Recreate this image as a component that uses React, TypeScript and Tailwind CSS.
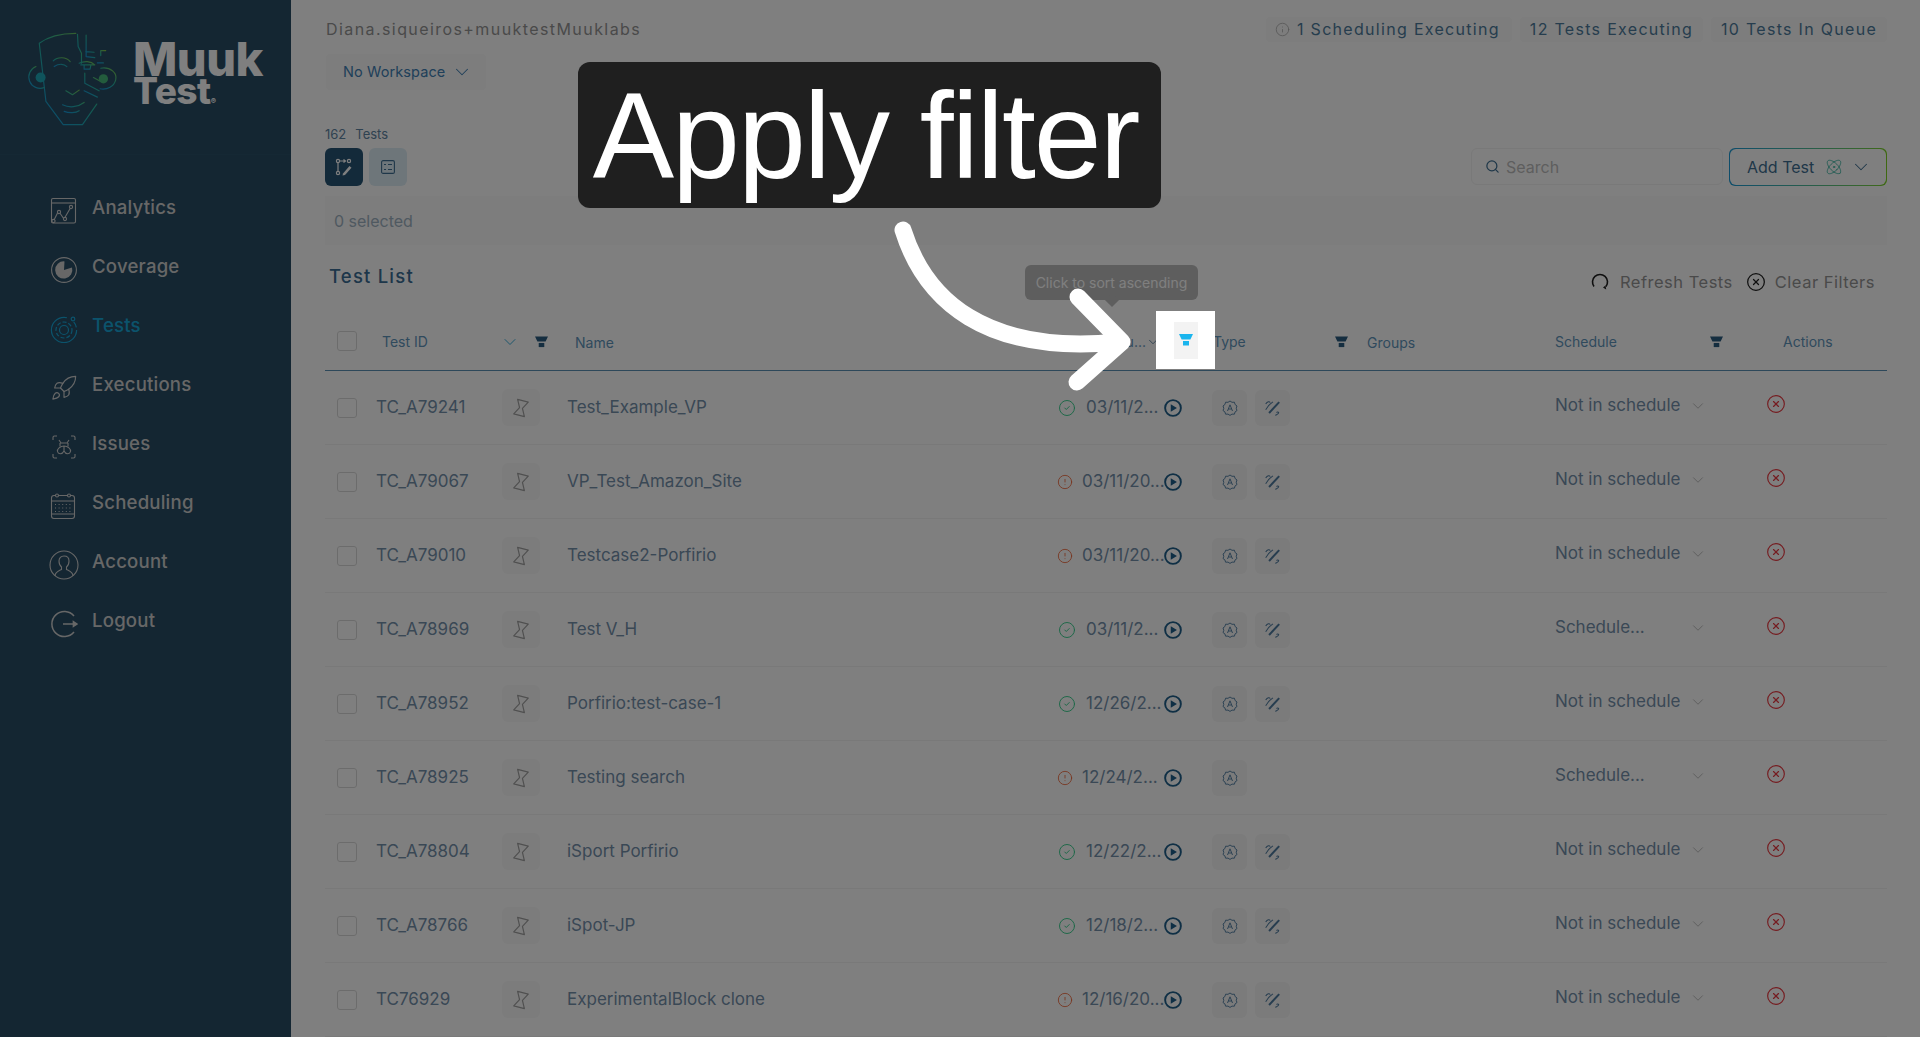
import { Atom, ChevronDown, CircleAlert, CircleCheck, CircleX, Info, Rocket, Search } from "lucide-react"

const FONT = "font-['Inter','Noto_Sans',sans-serif]"

const ROWS = [
  { id: "TC_A79241", name: "Test_Example_VP", ok: true, date: "03/11/2...", sched: "Not in schedule", pen: true },
  { id: "TC_A79067", name: "VP_Test_Amazon_Site", ok: false, date: "03/11/20...", sched: "Not in schedule", pen: true },
  { id: "TC_A79010", name: "Testcase2-Porfirio", ok: false, date: "03/11/20...", sched: "Not in schedule", pen: true },
  { id: "TC_A78969", name: "Test V_H", ok: true, date: "03/11/2...", sched: "Schedule...", pen: true },
  { id: "TC_A78952", name: "Porfirio:test-case-1", ok: true, date: "12/26/2...", sched: "Not in schedule", pen: true },
  { id: "TC_A78925", name: "Testing search", ok: false, date: "12/24/2...", sched: "Schedule...", pen: false },
  { id: "TC_A78804", name: "iSport Porfirio", ok: true, date: "12/22/2...", sched: "Not in schedule", pen: true },
  { id: "TC_A78766", name: "iSpot-JP", ok: true, date: "12/18/2...", sched: "Not in schedule", pen: true },
  { id: "TC76929", name: "ExperimentalBlock clone", ok: false, date: "12/16/20...", sched: "Not in schedule", pen: true },
]

function Funnel({ className }: { className?: string }) {
  return (
    <svg viewBox="0 0 14 12" className={className} fill="currentColor">
      <path d="M0 0h14l-2.6 5.4H2.6z" />
      <path d="M4 7h6v4.5H4z" />
    </svg>
  )
}

function Logo() {
  return (
    <svg viewBox="70 85 290 295" className="w-[97px] h-[98px]" fill="none" strokeWidth="3.5" strokeLinecap="round" strokeLinejoin="round">
      <defs>
        <linearGradient id="face" x1="1" y1="0" x2="0.2" y2="1">
          <stop offset="0" stopColor="#8cc63f" />
          <stop offset="0.5" stopColor="#29b6a0" />
          <stop offset="1" stopColor="#1798d8" />
        </linearGradient>
      </defs>
      <g stroke="url(#face)">
        <path d="M225 95C185 95 145 102 115 125L135 300L187 370H245L288 308" />
        <path d="M230 98L232 135L242 155V185" />
        <path d="M256 100V165L282 168M255 150L280 152" />
        <path d="M300 162V147H315M290 184H308" />
        <path d="M157 178C170 165 195 165 208 180M160 195C175 185 190 187 198 195" />
        <path d="M235 185C250 178 270 178 282 190M240 190H280M250 190V203H268L270 192" />
        <path d="M252 215V245L295 268M250 268L290 287M278 228L300 240" />
        <path d="M195 268L215 280L235 266M185 310C205 320 230 318 250 303M190 330C205 336 225 335 235 328" />
        <path d="M105 195A33 33 0 1 0 130 258" />
        <path d="M300 200C330 195 350 215 345 235C340 255 320 266 298 262" />
        <circle cx="119" cy="228" r="15" fill="#1fa9b8" stroke="none" />
        <circle cx="308" cy="232" r="14" fill="#46b97a" stroke="none" />
      </g>
    </svg>
  )
}

const NAV_ICON = "w-[28px] h-[28px] shrink-0"

function AnalyticsIcon() {
  return (
    <svg viewBox="0 0 28 28" className={NAV_ICON} fill="none" stroke="currentColor" strokeWidth="1.1">
      <rect x="1.5" y="1.5" width="24" height="24.5" rx="1.5" />
      <path d="M1.5 6h24" />
      <path d="M3.5 24L8.5 14L14 22L21 10" />
      <circle cx="3.5" cy="24" r="1.6" fill="#284c64" />
      <circle cx="9" cy="15" r="1.6" fill="#284c64" />
      <circle cx="15" cy="22" r="1.6" fill="#284c64" />
      <circle cx="21" cy="10" r="1.6" fill="#284c64" />
    </svg>
  )
}

function CoverageIcon() {
  return (
    <svg viewBox="0 0 28 28" className={NAV_ICON}>
      <circle cx="14" cy="14" r="12.4" fill="none" stroke="currentColor" strokeWidth="1.1" />
      <path d="M14 14L22 11.5A8.6 8.6 0 1 1 14.5 5.4z" fill="currentColor" />
    </svg>
  )
}

function TestsIcon() {
  return (
    <svg viewBox="0 0 28 28" className={NAV_ICON} fill="none" stroke="currentColor" strokeWidth="1.2">
      <circle cx="14" cy="15" r="12.6" strokeDasharray="62 8 6 4" />
      <circle cx="14" cy="15" r="8" strokeDasharray="4 2" />
      <circle cx="14" cy="15" r="4.5" />
      <circle cx="23" cy="4" r="1.8" />
    </svg>
  )
}

function IssuesIcon() {
  return (
    <svg viewBox="0 0 28 28" className={NAV_ICON} fill="none" stroke="currentColor" strokeWidth="1.1">
      <path d="M3 7V4.500Q3 3 4.500 3H7M21 3h2.500Q25 3 25 4.500V7M25 21v2.500Q25 25 23.500 25H21M7 25H4.500Q3 25 3 23.500V21" />
      <path d="M9 7l2 3h6l2-3M10 10v3.500M18 10v3.500" />
      <path d="M14 13c-4 0-7 3-6.500 5.500S12 22 14 18c2 4 6 3 6.500.5S18 13 14 13zM14 13v5" />
    </svg>
  )
}

function CalendarIcon() {
  return (
    <svg viewBox="0 0 28 28" className={NAV_ICON} fill="none" stroke="currentColor" strokeWidth="1.1">
      <rect x="1.500" y="3.500" width="23" height="23" rx="2.500" />
      <path d="M1.500 9h23M1.500 22h23" />
      <circle cx="7" cy="3.500" r="1.500" fill="#284c64" />
      <circle cx="19" cy="3.500" r="1.500" fill="#284c64" />
      <path d="M5 12.500h17M5 16h17M5 19.500h17" strokeDasharray="1 2.600" />
    </svg>
  )
}

function AccountIcon() {
  return (
    <svg viewBox="0 0 30 30" className="w-[30px] h-[30px] shrink-0" fill="none" stroke="currentColor" strokeWidth="1.1">
      <circle cx="15" cy="15" r="14" />
      <path d="M6 26c0-4 3.500-5 6.500-6.500v-2.500c-2-1.500-2.500-4-2.500-6 0-3 2-5 5-5s5 2 5 5c0 2-.5 4.500-2.500 6v2.500c3 1.500 6.500 2.500 6.500 6.500" />
    </svg>
  )
}

function LogoutIcon() {
  return (
    <svg viewBox="0 0 28 28" className={NAV_ICON} fill="none" stroke="currentColor" strokeWidth="1.500">
      <path d="M24 6A12.500 12.500 0 1 0 24 22" />
      <path d="M13 14h14" />
      <path d="M27 14l-3.600-2.400v4.800z" fill="currentColor" />
    </svg>
  )
}

const NAV = [
  { label: "Analytics", icon: <AnalyticsIcon /> },
  { label: "Coverage", icon: <CoverageIcon /> },
  { label: "Tests", icon: <TestsIcon />, active: true },
  { label: "Executions", icon: <Rocket className={NAV_ICON} strokeWidth={1} /> },
  { label: "Issues", icon: <IssuesIcon /> },
  { label: "Scheduling", icon: <CalendarIcon /> },
  { label: "Account", icon: <AccountIcon /> },
  { label: "Logout", icon: <LogoutIcon /> },
]

function Sidebar() {
  return (
    <aside className="w-[291px] shrink-0 bg-[#284c64] flex flex-col">
      <div className="h-[155px] flex items-start gap-[12px] pl-[24px] pt-[30px] border-b border-[#2b5068]">
        <Logo />
        <div className="font-['Inter',sans-serif] font-extrabold text-white pt-[10px]">
          <div className="text-[47px] leading-[38px] tracking-[-0.5px]">Muuk</div>
          <div className="text-[37px] leading-[26px] tracking-[-0.5px]">
            Test<span className="text-[8px]">®</span>
          </div>
        </div>
      </div>
      <nav className="flex flex-col pt-[24px] gap-[1px]">
        {NAV.map((n) => (
          <a
            key={n.label}
            className={
              n.active
                ? "h-[58px] flex items-center gap-[14px] pl-[50px] text-[#17a7d9]"
                : "h-[58px] flex items-center gap-[14px] pl-[50px] text-[#cfcfcf]"
            }
          >
            <span className="w-[28px] h-[30px] flex items-center justify-center translate-y-[3px]">{n.icon}</span>
            <span className="text-[18.6px] font-medium tracking-[0.2px]">{n.label}</span>
          </a>
        ))}
      </nav>
    </aside>
  )
}

function TopBar() {
  return (
    <div className="flex items-center justify-between h-[24px] mt-[17px]">
      <span className="text-[16px] tracking-[1.42px] text-[#949494] pl-[1px]">Diana.siqueiros+muuktestMuuklabs</span>
      <div className="flex gap-[8px] text-[16px] tracking-[1.3px] text-[#4d7a9c]">
        <span className="h-[25px] w-[246px] flex items-center bg-[#fafafa] rounded pl-[9px] gap-[7px] whitespace-nowrap">
          <Info className="w-[15px] h-[15px] text-[#a8a8a8]" strokeWidth={1.2} />1 Scheduling Executing
        </span>
        <span className="h-[25px] w-[183px] flex items-center justify-center bg-[#fafafa] rounded whitespace-nowrap">12 Tests Executing</span>
        <span className="h-[25px] w-[176px] flex items-center justify-center bg-[#fafafa] rounded whitespace-nowrap">10 Tests In Queue</span>
      </div>
    </div>
  )
}

function ViewBar() {
  return (
    <div className="flex items-end justify-between mt-[7px]">
      <div className="flex gap-[6px]">
        <button className="w-[38px] h-[38px] rounded-md bg-[#265474] flex items-center justify-center text-white">
          <svg viewBox="0 0 18 18" className="w-[18px] h-[18px]" fill="none" stroke="currentColor" strokeWidth="1.200">
            <circle cx="3" cy="3" r="1.600" />
            <circle cx="3" cy="15" r="1.600" />
            <circle cx="14" cy="3" r="1.600" />
            <path d="M3 4.600v8.800M5 3h5M8.500 1.500L10.500 3L8.500 4.500" />
            <path d="M8 15.500L14.500 8l2 1.700L10 17l-2.500.5z" fill="currentColor" stroke="none" />
          </svg>
        </button>
        <button className="w-[38px] h-[38px] rounded-md bg-[#dcecf5] flex items-center justify-center text-[#3f6f92]">
          <svg viewBox="0 0 14 14" className="w-[14px] h-[14px]" fill="none" stroke="currentColor" strokeWidth="1.100">
            <rect x="0.600" y="0.600" width="12.800" height="12.800" rx="1.500" />
            <path d="M3 4.500h2M7 4.500h4M3 9.500h2M7 9.500h4" />
          </svg>
        </button>
      </div>
      <div className="flex gap-[6px]">
        <div className="w-[252px] h-[37px] rounded-md border border-[#f2f2f2] flex items-center pl-[13px] gap-[6px] text-[16px] text-[#bdbdbd]">
          <Search className="w-[15px] h-[15px] text-[#3f6f92]" strokeWidth={2} />
          Search
        </div>
        <div className="w-[158px] h-[38px] rounded-md p-[1px] bg-gradient-to-r from-[#1c9ad6] to-[#7ed321]">
          <div className="w-full h-full rounded-md bg-white flex items-center pl-[17px] text-[16px] text-[#3f6f92]">
            Add Test
            <Atom className="w-[18px] h-[18px] ml-[11px] text-[#3eb6a3]" strokeWidth={1.2} />
            <ChevronDown className="w-[22px] h-[22px] ml-[7px]" strokeWidth={1.1} />
          </div>
        </div>
      </div>
    </div>
  )
}

function Toolbar() {
  return (
    <div className="flex items-center justify-between mt-[20px] h-[24px]">
      <span className="pl-[4px] text-[18.500px] font-medium tracking-[1.2px] text-[#3a6d94]">Test List</span>
      <div className="flex items-center pr-[12px] pt-[10px] text-[16.500px] tracking-[0.5px] text-[#949494]">
        <svg viewBox="0 0 18 18" className="w-[18px] h-[18px] mr-[11px] text-[#1f1f1f]" fill="none" stroke="currentColor" strokeWidth="1.600">
          <path d="M3 13.500A7.500 7.500 0 1 1 15 13.500" />
          <path d="M15.200 16.500L14.500 12.500l-2.500 2z" fill="currentColor" stroke="none" />
        </svg>
        Refresh Tests
        <CircleX className="w-[20px] h-[20px] ml-[13px] mr-[9px] text-[#1f1f1f]" strokeWidth={1.5} />
        Clear Filters
      </div>
    </div>
  )
}

function HeaderRow() {
  const label = "text-[14px] text-[#5f94bb] whitespace-nowrap"
  return (
    <div className="flex h-[58px] items-center border-b border-[#5a90b4] mt-[24px] relative">
      <div className="w-[57px] pl-[12px] shrink-0 -translate-y-[1px]">
        <div className="w-[20px] h-[20px] border border-[#d9d9d9] rounded-[3px]" />
      </div>
      <div className="w-[193px] shrink-0 flex items-center">
        <span className={label + " w-[118px]"}>Test ID</span>
        <ChevronDown className="w-[20px] h-[20px] text-[#29a6d6]" strokeWidth={1.100} />
        <Funnel className="w-[13px] h-[12px] ml-[15px] text-[#2a5c80]" />
      </div>
      <div className="w-[445px] shrink-0">
        <span className={label}>Name</span>
      </div>
      <div className="w-[140px] shrink-0 flex items-center justify-end">
        <span className={label}>Statu...</span>
        <ChevronDown className="w-[14px] h-[14px] text-[#2a5c80]" strokeWidth={1.200} />
      </div>
      <div className="w-[207px] shrink-0 flex items-center pl-[53px]">
        <span className={label + " w-[122px]"}>Type</span>
        <Funnel className="w-[13px] h-[12px] text-[#2a5c80] shrink-0" />
      </div>
      <div className="w-[188px] shrink-0">
        <span className={label}>Groups</span>
      </div>
      <div className="w-[228px] shrink-0 flex items-center">
        <span className={label + " w-[155px]"}>Schedule</span>
        <Funnel className="w-[13px] h-[12px] text-[#2a5c80]" />
      </div>
      <span className={label}>Actions</span>
      <div className="absolute left-[700px] -top-[48px] w-[173px] h-[35px] rounded-md bg-[#bcbcbc] flex items-center justify-center text-[14px] text-white whitespace-nowrap">
        Click to sort ascending
        <div className="absolute -bottom-[5px] left-[82px] w-[10px] h-[10px] rotate-45 bg-[#bcbcbc]" />
      </div>
    </div>
  )
}

function Row({ r }: { r: (typeof ROWS)[number] }) {
  return (
    <div className="flex h-[74px] items-center border-b border-[#f3f3f3] text-[17px] text-[#7490ab]">
      <div className="w-[51px] pl-[12px] shrink-0">
        <div className="w-[20px] h-[20px] border border-[#d9d9d9] rounded-[3px]" />
      </div>
      <div className="w-[126px] shrink-0">{r.id}</div>
      <div className="w-[65px] shrink-0">
        <div className="w-[38px] h-[37px] rounded-md bg-[#f9f9f9] flex items-center justify-center">
          <svg viewBox="0 0 18 18" className="w-[18px] h-[18px] rotate-[15deg] text-[#a0a0a0]" fill="none" stroke="currentColor" strokeWidth="1.200" strokeLinejoin="round">
            <path d="M3.500 1.500h11L10.500 9l4 7.500h-11l4-7.500z" />
          </svg>
        </div>
      </div>
      <div className="w-[489px] shrink-0">{r.name}</div>
      <div className="w-[149px] shrink-0 flex items-center">
        {r.ok ? (
          <CircleCheck className="w-[18px] h-[18px] ml-[2px] mr-[10px] text-[#3bd08f] shrink-0" strokeWidth={1.300} />
        ) : (
          <CircleAlert className="w-[16px] h-[16px] ml-[1px] mr-[9px] text-[#f0683c] shrink-0" strokeWidth={1.300} />
        )}
        <span className="whitespace-nowrap w-[80px] mr-auto">{r.date}</span>
        <svg viewBox="0 0 16 16" className="w-[18px] h-[18px] text-[#1f5f8a] mr-[23px] shrink-0" fill="none" stroke="currentColor" strokeWidth="1.700">
          <circle cx="8" cy="8" r="7" />
          <path d="M6 4.600L11.500 8L6 11.400z" fill="currentColor" stroke="none" />
        </svg>
      </div>
      <div className="w-[350px] shrink-0 flex gap-[8px] pl-[7px]">
        <div className="w-[35px] h-[36px] rounded-md bg-[#f7f7f7] flex items-center justify-center text-[#5a85a8]">
          <svg viewBox="0 0 16 16" className="w-[16px] h-[16px]" fill="none" stroke="currentColor" strokeWidth="1">
            <path d="M8 1l2 1.300 2.400-.1.700 2.300 1.900 1.500-.8 2.200.8 2.300-1.900 1.400-.7 2.300-2.400-.1L8 15.400l-2-1.300-2.400.1-.7-2.300L1 10.500 1.800 8.300 1 6l1.900-1.500.7-2.300 2.400.1z" />
            <path d="M5.500 11L8 4.800L10.500 11M6.300 9h3.400" />
          </svg>
        </div>
        {r.pen && (
          <div className="w-[35px] h-[36px] rounded-md bg-[#f7f7f7] flex items-center justify-center text-[#4f7b9f]">
            <svg viewBox="0 0 16 16" className="w-[18px] h-[18px]" fill="none" stroke="currentColor" strokeWidth="0.900">
              <path d="M4.500 12.500L13.500 2.800" strokeWidth="1.800" />
              <path d="M1.500 4.500C3 2 5 2 5.500 3.200M1.500 9.500C3.500 6.500 5.500 4 8 2.500M10 14.500c1-.5 3.500-1 3-2.500-.3-.8-1.500-.5-2 0" />
            </svg>
          </div>
        )}
      </div>
      <div className="w-[154px] shrink-0 flex items-center -translate-y-[2px] whitespace-nowrap">
        <span className="w-[134px]">{r.sched}</span>
        <ChevronDown className="w-[18px] h-[18px] text-[#a8a8a8] shrink-0" strokeWidth={1} />
      </div>
      <div className="pl-[57px] -translate-y-[4px] text-[#ea3a42]">
        <CircleX className="w-[20px] h-[20px]" strokeWidth={1.400} />
      </div>
    </div>
  )
}

export default function App() {
  return (
    <div className={"relative w-[1920px] h-[1037px] overflow-hidden bg-white flex " + FONT}>
      <Sidebar />
      <main className="flex-1 min-w-0 pl-[34px] pr-[33px]">
        <TopBar />
        <button className="mt-[13px] ml-[1px] w-[160px] h-[36px] rounded bg-[#fafafa] flex items-center pl-[17px] gap-[6px] text-[14.500px] tracking-[0.1px] text-[#4080b4]">
          No Workspace
          <ChevronDown className="w-[22px] h-[22px]" strokeWidth={1.100} />
        </button>
        <div className="mt-[35px] h-[16px] leading-[16px] flex gap-[9px] text-[13px] text-[#5f84a2] translate-y-[1px]">
          <span>162</span>
          <span>Tests</span>
        </div>
        <ViewBar />
        <div className="mt-[10px] h-[49px] bg-[#fafafa] flex items-center pl-[9px] text-[16px] text-[#9fb2c2]">0 selected</div>
        <Toolbar />
        <HeaderRow />
        {ROWS.map((r) => (
          <Row key={r.id} r={r} />
        ))}
      </main>

      {/* dim layer, then the tutorial callout above it */}
      <div className="absolute inset-0 bg-black/50" />
      <div className="absolute left-[1156px] top-[311px] w-[59px] h-[58px] bg-white flex items-center justify-center">
        <div className="w-[24px] h-[37px] bg-[#f3f3f3] flex items-center justify-center">
          <Funnel className="w-[14px] h-[12px] text-[#1ab5ee]" />
        </div>
      </div>
      <div className="absolute left-[578px] top-[62px] w-[583px] h-[146px] rounded-[12px] bg-[#1f1f1f] flex items-center justify-center pt-[2px] pr-[8px] text-[122px] tracking-[-2px] leading-none text-white whitespace-nowrap font-['Liberation_Sans',sans-serif]">
        Apply filter
      </div>
      <svg className="absolute left-0 top-0 w-[1920px] h-[1037px] pointer-events-none" viewBox="0 0 1920 1037" fill="none" stroke="#fff" strokeWidth="17" strokeLinecap="round" strokeLinejoin="round">
        <path d="M903 230C925 300 985 355 1118 342" />
        <path d="M1078 297L1122 342L1077 382" />
      </svg>
    </div>
  )
}
